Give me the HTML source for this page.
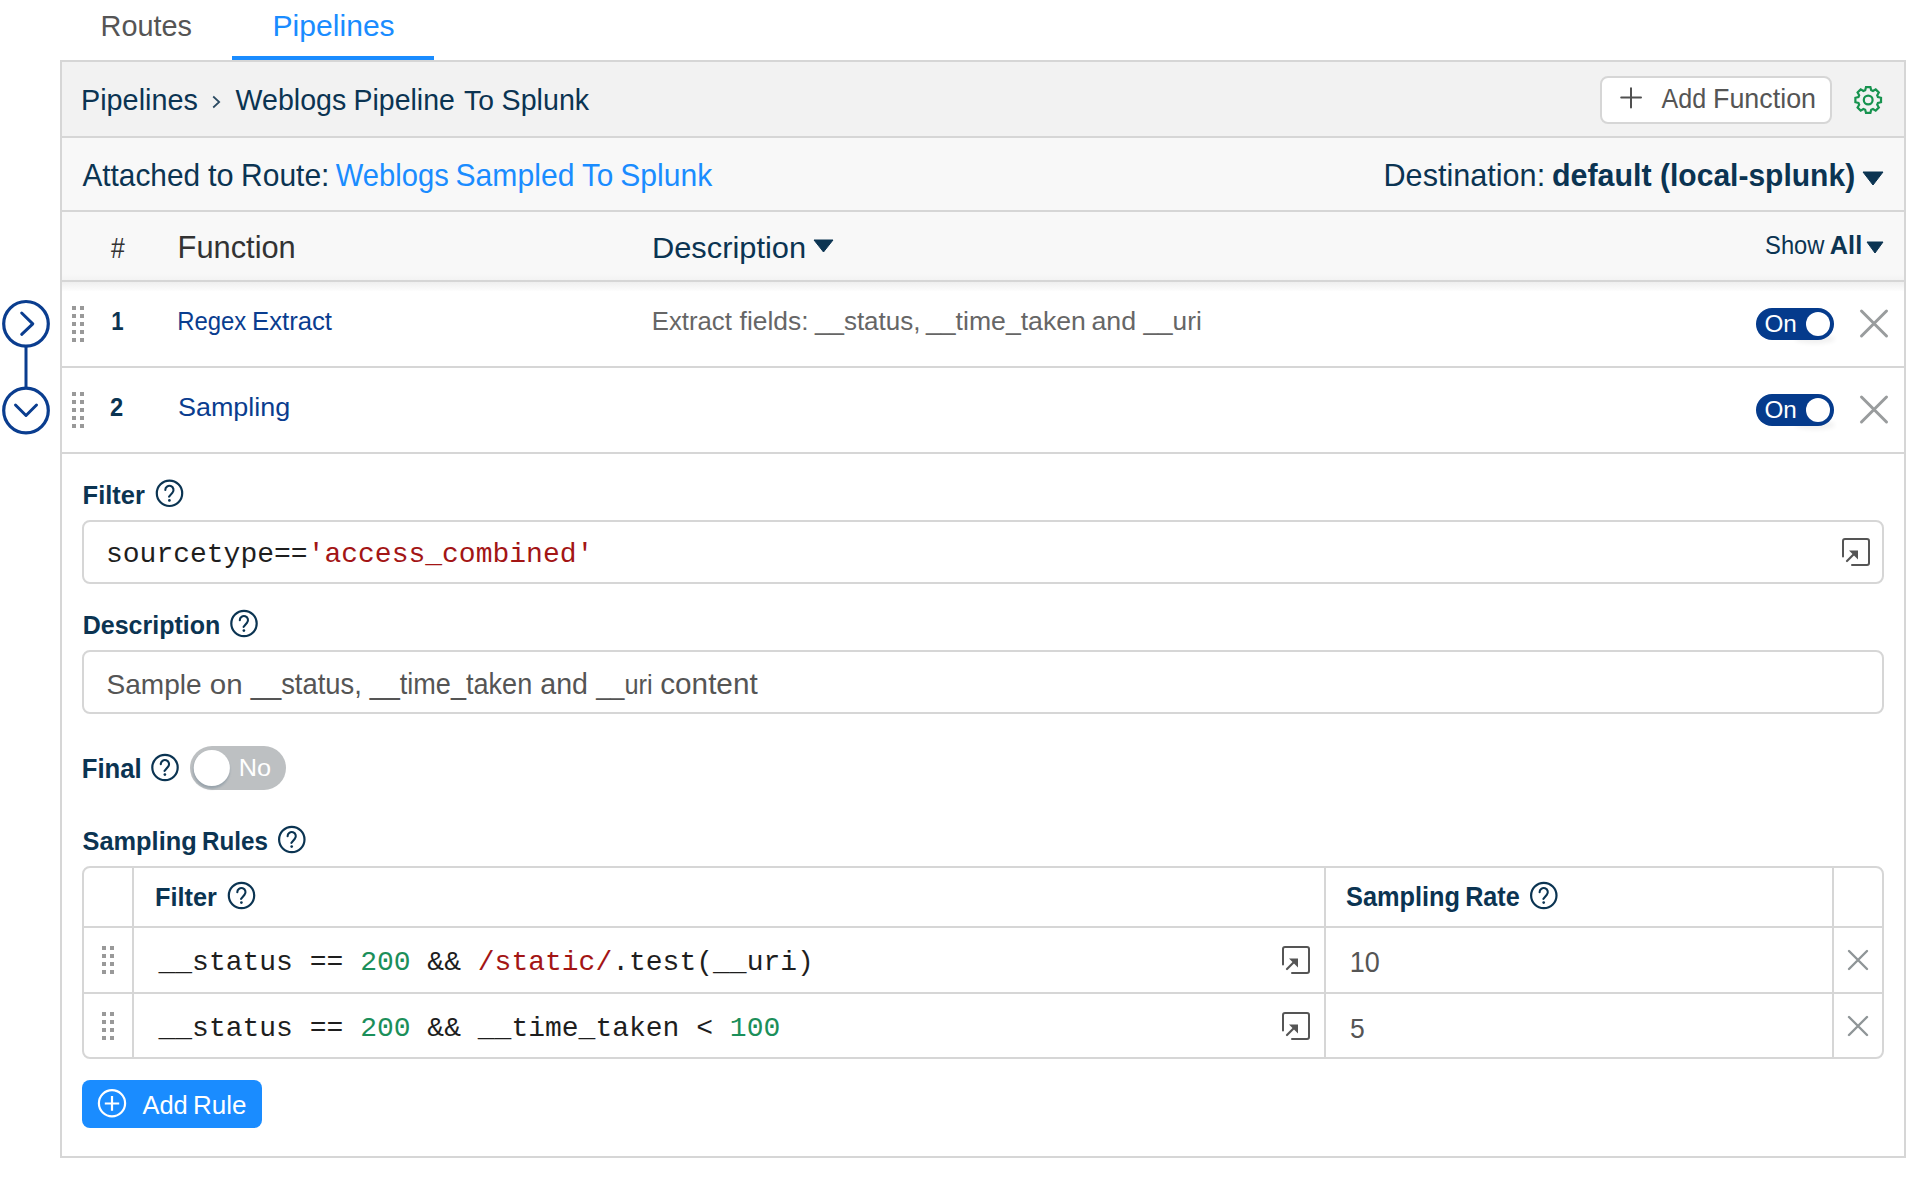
<!DOCTYPE html>
<html><head><meta charset="utf-8"><title>Pipelines - Weblogs Pipeline To Splunk</title>
<style>
*{box-sizing:border-box;margin:0;padding:0}
html,body{width:1922px;height:1180px;overflow:hidden;background:#fff;font-family:"Liberation Sans",sans-serif}
.a{position:absolute}
.ov{position:absolute;left:0;top:0;pointer-events:none}
</style></head>
<body>
<div class="a" style="left:232px;top:56px;width:202px;height:4px;background:#1a8cff"></div><div class="a" style="left:60px;top:60px;width:1846px;height:1098px;border:2px solid #d6d6d6;background:#fff"></div><div class="a" style="left:62px;top:62px;width:1842px;height:74px;background:#f2f2f2"></div><div class="a" style="left:62px;top:136px;width:1842px;height:2px;background:#d6d6d6"></div><div class="a" style="left:62px;top:138px;width:1842px;height:72px;background:#f8f8f8"></div><div class="a" style="left:62px;top:210px;width:1842px;height:2px;background:#d6d6d6"></div><div class="a" style="left:62px;top:212px;width:1842px;height:68px;background:#f8f8f8"></div><div class="a" style="left:62px;top:280px;width:1842px;height:2px;background:#d6d6d6"></div><div class="a" style="left:62px;top:282px;width:1842px;height:9px;background:linear-gradient(#efefef,#fdfdfd)"></div><div class="a" style="left:62px;top:274px;width:1842px;height:6px;background:linear-gradient(#f8f8f8,#f3f3f3)"></div><div class="a" style="left:62px;top:366px;width:1842px;height:2px;background:#d6d6d6"></div><div class="a" style="left:62px;top:452px;width:1842px;height:2px;background:#d6d6d6"></div><div class="a" style="left:1600px;top:76px;width:232px;height:48px;border:2px solid #d6d6d6;border-radius:8px;background:#fff"></div><div class="a" style="left:82px;top:520px;width:1802px;height:64px;border:2px solid #d6d6d6;border-radius:8px;background:#fff"></div><div class="a" style="left:82px;top:650px;width:1802px;height:64px;border:2px solid #d6d6d6;border-radius:8px;background:#fff"></div><div class="a" style="left:190px;top:746px;width:96px;height:44px;background:#bdc0c2;border-radius:22px"></div><div class="a" style="left:82px;top:866px;width:1802px;height:193px;border:2px solid #d6d6d6;border-radius:8px;background:#fff"></div><div class="a" style="left:84px;top:926px;width:1798px;height:2px;background:#d6d6d6"></div><div class="a" style="left:84px;top:992px;width:1798px;height:2px;background:#d6d6d6"></div><div class="a" style="left:132px;top:868px;width:2px;height:189px;background:#d6d6d6"></div><div class="a" style="left:1324px;top:868px;width:2px;height:189px;background:#d6d6d6"></div><div class="a" style="left:1832px;top:868px;width:2px;height:189px;background:#d6d6d6"></div><div class="a" style="left:82px;top:1080px;width:180px;height:48px;background:#1a8cff;border-radius:8px"></div>
<svg class="ov" width="1922" height="1180" viewBox="0 0 1922 1180"><defs><filter id="blur1" x="-20%" y="-20%" width="140%" height="140%"><feGaussianBlur stdDeviation="0.8"/></filter><filter id="blur2" x="-50%" y="-50%" width="200%" height="200%"><feGaussianBlur stdDeviation="2"/></filter></defs><g font-family='"Liberation Sans", sans-serif'><path d="M1865.19 90.26 L1866.00 87.19 L1870.40 87.19 L1871.21 90.26 L1872.96 90.98 L1875.70 89.38 L1878.82 92.50 L1877.22 95.24 L1877.94 96.99 L1881.01 97.80 L1881.01 102.20 L1877.94 103.01 L1877.22 104.76 L1878.82 107.50 L1875.70 110.62 L1872.96 109.02 L1871.21 109.74 L1870.40 112.81 L1866.00 112.81 L1865.19 109.74 L1863.44 109.02 L1860.70 110.62 L1857.58 107.50 L1859.18 104.76 L1858.46 103.01 L1855.39 102.20 L1855.39 97.80 L1858.46 96.99 L1859.18 95.24 L1857.58 92.50 L1860.70 89.38 L1863.44 90.98Z" fill="none" stroke="#17934f" stroke-width="2.2" stroke-linejoin="miter"/><circle cx="1868.2" cy="100" r="4.4" fill="none" stroke="#17934f" stroke-width="2.2"/><path d="M1631 88.2 V107.6 M1621.2 97.6 H1641" stroke="#505050" stroke-width="2" stroke-linecap="round"/><path d="M213.2 96.5 L219.2 102 L213.2 107.5" fill="none" stroke="#2b4a62" stroke-width="1.7"/><path d="M1863 172 H1883 L1873.0 185 Z" fill="#0b3452" stroke="#0b3452" stroke-width="1" stroke-linejoin="round"/><path d="M814 240 H833 L823.5 252 Z" fill="#0b3452" stroke="#0b3452" stroke-width="1" stroke-linejoin="round"/><path d="M1867 242 H1883 L1875.0 253 Z" fill="#0b3452" stroke="#0b3452" stroke-width="1" stroke-linejoin="round"/><circle cx="26" cy="323.8" r="22.3" fill="none" stroke="#0a3d8f" stroke-width="3.2"/><path d="M21.7 313 L32.8 323.8 L21.7 334.3" fill="none" stroke="#0a3d8f" stroke-width="3" stroke-linecap="round" stroke-linejoin="round"/><path d="M26 346 V388" stroke="#0a3d8f" stroke-width="3"/><circle cx="26" cy="410.5" r="22.3" fill="none" stroke="#0a3d8f" stroke-width="3.2"/><path d="M15.5 405 L26 415.5 L36.5 405" fill="none" stroke="#0a3d8f" stroke-width="3" stroke-linecap="round" stroke-linejoin="round"/><rect x="72" y="306" width="4" height="4" fill="#999"/><rect x="80" y="306" width="4" height="4" fill="#999"/><rect x="72" y="314" width="4" height="4" fill="#999"/><rect x="80" y="314" width="4" height="4" fill="#999"/><rect x="72" y="322" width="4" height="4" fill="#999"/><rect x="80" y="322" width="4" height="4" fill="#999"/><rect x="72" y="330" width="4" height="4" fill="#999"/><rect x="80" y="330" width="4" height="4" fill="#999"/><rect x="72" y="338" width="4" height="4" fill="#999"/><rect x="80" y="338" width="4" height="4" fill="#999"/><rect x="72" y="392" width="4" height="4" fill="#999"/><rect x="80" y="392" width="4" height="4" fill="#999"/><rect x="72" y="400" width="4" height="4" fill="#999"/><rect x="80" y="400" width="4" height="4" fill="#999"/><rect x="72" y="408" width="4" height="4" fill="#999"/><rect x="80" y="408" width="4" height="4" fill="#999"/><rect x="72" y="416" width="4" height="4" fill="#999"/><rect x="80" y="416" width="4" height="4" fill="#999"/><rect x="72" y="424" width="4" height="4" fill="#999"/><rect x="80" y="424" width="4" height="4" fill="#999"/><rect x="102" y="946" width="4" height="4" fill="#999"/><rect x="110" y="946" width="4" height="4" fill="#999"/><rect x="102" y="954" width="4" height="4" fill="#999"/><rect x="110" y="954" width="4" height="4" fill="#999"/><rect x="102" y="962" width="4" height="4" fill="#999"/><rect x="110" y="962" width="4" height="4" fill="#999"/><rect x="102" y="970" width="4" height="4" fill="#999"/><rect x="110" y="970" width="4" height="4" fill="#999"/><rect x="102" y="1012" width="4" height="4" fill="#999"/><rect x="110" y="1012" width="4" height="4" fill="#999"/><rect x="102" y="1020" width="4" height="4" fill="#999"/><rect x="110" y="1020" width="4" height="4" fill="#999"/><rect x="102" y="1028" width="4" height="4" fill="#999"/><rect x="110" y="1028" width="4" height="4" fill="#999"/><rect x="102" y="1036" width="4" height="4" fill="#999"/><rect x="110" y="1036" width="4" height="4" fill="#999"/><ellipse cx="1815" cy="339" rx="20" ry="5" fill="#000" opacity="0.05" filter="url(#blur2)"/><rect x="1756" y="308" width="78" height="32" rx="16" fill="#053b8c"/><circle cx="1818" cy="324" r="12" fill="#fff"/><ellipse cx="1815" cy="425" rx="20" ry="5" fill="#000" opacity="0.05" filter="url(#blur2)"/><rect x="1756" y="394" width="78" height="32" rx="16" fill="#053b8c"/><circle cx="1818" cy="410" r="12" fill="#fff"/><path d="M1861.5 311.0 L1886.5 336.0 M1886.5 311.0 L1861.5 336.0" stroke="#999c9d" stroke-width="3" stroke-linecap="round"/><path d="M1861.5 397.0 L1886.5 422.0 M1886.5 397.0 L1861.5 422.0" stroke="#999c9d" stroke-width="3" stroke-linecap="round"/><path d="M1849 951 L1867 969 M1867 951 L1849 969" stroke="#8f9597" stroke-width="2.4" stroke-linecap="round"/><path d="M1849 1017 L1867 1035 M1867 1017 L1849 1035" stroke="#8f9597" stroke-width="2.4" stroke-linecap="round"/><circle cx="169.5" cy="493.3" r="12.7" fill="none" stroke="#0b3452" stroke-width="2.2"/><path d="M165.30 490.00 A4.1 4.1 0 1 1 172.50 492.60 L169.10 496.70" fill="none" stroke="#0b3452" stroke-width="2.1" stroke-linecap="round" stroke-linejoin="round"/><circle cx="169.40" cy="500.40" r="1.35" fill="#0b3452"/><circle cx="244" cy="623.5" r="12.7" fill="none" stroke="#0b3452" stroke-width="2.2"/><path d="M239.80 620.20 A4.1 4.1 0 1 1 247.00 622.80 L243.60 626.90" fill="none" stroke="#0b3452" stroke-width="2.1" stroke-linecap="round" stroke-linejoin="round"/><circle cx="243.90" cy="630.60" r="1.35" fill="#0b3452"/><circle cx="165" cy="767.5" r="12.7" fill="none" stroke="#0b3452" stroke-width="2.2"/><path d="M160.80 764.20 A4.1 4.1 0 1 1 168.00 766.80 L164.60 770.90" fill="none" stroke="#0b3452" stroke-width="2.1" stroke-linecap="round" stroke-linejoin="round"/><circle cx="164.90" cy="774.60" r="1.35" fill="#0b3452"/><circle cx="291.8" cy="839.5" r="12.7" fill="none" stroke="#0b3452" stroke-width="2.2"/><path d="M287.60 836.20 A4.1 4.1 0 1 1 294.80 838.80 L291.40 842.90" fill="none" stroke="#0b3452" stroke-width="2.1" stroke-linecap="round" stroke-linejoin="round"/><circle cx="291.70" cy="846.60" r="1.35" fill="#0b3452"/><circle cx="241.5" cy="895.5" r="12.7" fill="none" stroke="#0b3452" stroke-width="2.2"/><path d="M237.30 892.20 A4.1 4.1 0 1 1 244.50 894.80 L241.10 898.90" fill="none" stroke="#0b3452" stroke-width="2.1" stroke-linecap="round" stroke-linejoin="round"/><circle cx="241.40" cy="902.60" r="1.35" fill="#0b3452"/><circle cx="1543.8" cy="895.5" r="12.7" fill="none" stroke="#0b3452" stroke-width="2.2"/><path d="M1539.60 892.20 A4.1 4.1 0 1 1 1546.80 894.80 L1543.40 898.90" fill="none" stroke="#0b3452" stroke-width="2.1" stroke-linecap="round" stroke-linejoin="round"/><circle cx="1543.70" cy="902.60" r="1.35" fill="#0b3452"/><path d="M1843 556.5 V541 a2 2 0 0 1 2 -2 H1867 a2 2 0 0 1 2 2 V563 a2 2 0 0 1 -2 2 H1852" fill="none" stroke="#555" stroke-width="2" stroke-linecap="round"/><path d="M1847 561 L1855 553" stroke="#555" stroke-width="2.2" stroke-linecap="round"/><path d="M1849 550.5 H1858 V559.5 Z" fill="#555"/><path d="M1283 964.5 V949 a2 2 0 0 1 2 -2 H1307 a2 2 0 0 1 2 2 V971 a2 2 0 0 1 -2 2 H1292" fill="none" stroke="#555" stroke-width="2" stroke-linecap="round"/><path d="M1287 969 L1295 961" stroke="#555" stroke-width="2.2" stroke-linecap="round"/><path d="M1289 958.5 H1298 V967.5 Z" fill="#555"/><path d="M1283 1030.5 V1015 a2 2 0 0 1 2 -2 H1307 a2 2 0 0 1 2 2 V1037 a2 2 0 0 1 -2 2 H1292" fill="none" stroke="#555" stroke-width="2" stroke-linecap="round"/><path d="M1287 1035 L1295 1027" stroke="#555" stroke-width="2.2" stroke-linecap="round"/><path d="M1289 1024.5 H1298 V1033.5 Z" fill="#555"/><circle cx="211.4" cy="770.2" r="18.5" fill="#98a3ab" filter="url(#blur1)"/><circle cx="211.8" cy="768" r="18.1" fill="#fff"/><circle cx="112" cy="1103.3" r="13.1" fill="none" stroke="#fff" stroke-width="2.2"/><path d="M112 1096 V1110.8 M104.8 1103.5 H119.2" stroke="#fff" stroke-width="2.2"/><text transform="translate(100.58 36) scale(0.9620 1)" font-weight="400" font-size="30.000" fill="#555555">Routes</text><text transform="translate(272.49 36) scale(1.0042 1)" font-weight="400" font-size="30.000" fill="#1a8cff">Pipelines</text><text transform="translate(80.98 110) scale(1.0088 1)" font-weight="400" font-size="28.571" fill="#0b3452">Pipelines</text><text transform="translate(235.60 110) scale(1.0000 1)" font-weight="400" font-size="28.571" fill="#0b3452">Weblogs</text><text transform="translate(353.51 110) scale(0.9970 1)" font-weight="400" font-size="28.571" fill="#0b3452">Pipeline</text><text transform="translate(464.00 110) scale(0.9897 1)" font-weight="400" font-size="28.571" fill="#0b3452">To</text><text transform="translate(501.60 110) scale(1.0023 1)" font-weight="400" font-size="28.571" fill="#0b3452">Splunk</text><text transform="translate(1661.60 108) scale(0.9234 1)" font-weight="400" font-size="27.143" fill="#555555">Add</text><text transform="translate(1713.02 108) scale(0.9901 1)" font-weight="400" font-size="27.143" fill="#555555">Function</text><text transform="translate(82.40 186) scale(0.9714 1)" font-weight="400" font-size="30.714" fill="#0b3452">Attached</text><text transform="translate(208.00 186) scale(1.0000 1)" font-weight="400" font-size="30.714" fill="#0b3452">to</text><text transform="translate(241.05 186) scale(0.9767 1)" font-weight="400" font-size="30.714" fill="#0b3452">Route:</text><text transform="translate(335.80 186) scale(0.9500 1)" font-weight="400" font-size="30.714" fill="#1a8cff">Weblogs</text><text transform="translate(455.52 186) scale(0.9814 1)" font-weight="400" font-size="30.714" fill="#1a8cff">Sampled</text><text transform="translate(581.90 186) scale(0.9677 1)" font-weight="400" font-size="30.714" fill="#1a8cff">To</text><text transform="translate(620.22 186) scale(0.9796 1)" font-weight="400" font-size="30.714" fill="#1a8cff">Splunk</text><text transform="translate(1383.51 186) scale(0.9968 1)" font-weight="400" font-size="30.714" fill="#0b3452">Destination:</text><text transform="translate(1552.01 186) scale(0.9900 1)" font-weight="700" font-size="30.714" fill="#0b3452">default</text><text transform="translate(1660.02 186) scale(0.9777 1)" font-weight="700" font-size="30.714" fill="#0b3452">(local-splunk)</text><text transform="translate(111.00 258) scale(0.8235 1)" font-weight="400" font-size="30.000" fill="#333333">#</text><text transform="translate(177.59 258) scale(1.0035 1)" font-weight="400" font-size="30.714" fill="#333333">Function</text><text transform="translate(651.95 258) scale(1.0274 1)" font-weight="400" font-size="30.000" fill="#0b3452">Description</text><text transform="translate(1765.08 254) scale(0.9219 1)" font-weight="400" font-size="25.714" fill="#0b3452">Show</text><text transform="translate(1829.84 254) scale(0.9581 1)" font-weight="700" font-size="26.429" fill="#0b3452">All</text><text transform="translate(111.13 330) scale(0.8654 1)" font-weight="700" font-size="25.714" fill="#0b3452">1</text><text transform="translate(177.14 330) scale(0.9306 1)" font-weight="400" font-size="25.714" fill="#0a3d8f">Regex</text><text transform="translate(252.00 330) scale(1.0000 1)" font-weight="400" font-size="25.714" fill="#0a3d8f">Extract</text><text transform="translate(651.75 330) scale(0.9737 1)" font-weight="400" font-size="26.429" fill="#666666">Extract</text><text transform="translate(739.60 330) scale(0.9985 1)" font-weight="400" font-size="26.429" fill="#666666">fields:</text><text transform="translate(814.98 330) scale(0.9840 1)" font-weight="400" font-size="26.429" fill="#666666">__status,</text><text transform="translate(926.01 330) scale(1.0076 1)" font-weight="400" font-size="26.429" fill="#666666">__time_taken</text><text transform="translate(1091.49 330) scale(1.0119 1)" font-weight="400" font-size="26.429" fill="#666666">and</text><text transform="translate(1143.49 330) scale(0.9914 1)" font-weight="400" font-size="26.429" fill="#666666">__uri</text><text transform="translate(1764.50 332) scale(1.0000 1)" font-weight="400" font-size="24.286" fill="#ffffff">On</text><text transform="translate(110.08 416) scale(0.9231 1)" font-weight="700" font-size="25.714" fill="#0b3452">2</text><text transform="translate(177.95 416) scale(1.0476 1)" font-weight="400" font-size="25.714" fill="#0a3d8f">Sampling</text><text transform="translate(1764.50 418) scale(1.0000 1)" font-weight="400" font-size="24.286" fill="#ffffff">On</text><text transform="translate(82.61 504) scale(0.9903 1)" font-weight="700" font-size="25.714" fill="#0b3452">Filter</text><text transform="translate(82.63 634) scale(0.9741 1)" font-weight="700" font-size="25.714" fill="#0b3452">Description</text><text transform="translate(106.52 694) scale(0.9821 1)" font-weight="400" font-size="28.571" fill="#555555">Sample</text><text transform="translate(209.77 694) scale(1.0345 1)" font-weight="400" font-size="28.571" fill="#555555">on</text><text transform="translate(250.66 694) scale(0.9591 1)" font-weight="400" font-size="28.571" fill="#555555">__status,</text><text transform="translate(369.65 694) scale(0.9480 1)" font-weight="400" font-size="28.571" fill="#555555">__time_taken</text><text transform="translate(540.30 694) scale(1.0000 1)" font-weight="400" font-size="28.571" fill="#555555">and</text><text transform="translate(596.19 694) scale(0.8889 1)" font-weight="400" font-size="28.571" fill="#555555">__uri</text><text transform="translate(660.26 694) scale(1.0398 1)" font-weight="400" font-size="28.571" fill="#555555">content</text><text transform="translate(81.71 778) scale(0.9467 1)" font-weight="700" font-size="27.143" fill="#0b3452">Final</text><text transform="translate(238.81 776) scale(1.0429 1)" font-weight="400" font-size="24.286" fill="#ffffff">No</text><text transform="translate(82.61 850) scale(0.9858 1)" font-weight="700" font-size="25.714" fill="#0b3452">Sampling</text><text transform="translate(202.06 850) scale(0.9412 1)" font-weight="700" font-size="25.714" fill="#0b3452">Rules</text><text transform="translate(155.02 906) scale(0.9839 1)" font-weight="700" font-size="25.714" fill="#0b3452">Filter</text><text transform="translate(1346.07 906) scale(0.9333 1)" font-weight="700" font-size="27.143" fill="#0b3452">Sampling</text><text transform="translate(1465.14 906) scale(0.9286 1)" font-weight="700" font-size="27.143" fill="#0b3452">Rate</text><text transform="translate(1349.71 972) scale(0.9448 1)" font-weight="400" font-size="28.571" fill="#555555">10</text><text transform="translate(1350.07 1038) scale(0.9286 1)" font-weight="400" font-size="28.571" fill="#555555">5</text><text transform="translate(142.40 1114) scale(0.9909 1)" font-weight="400" font-size="25.714" fill="#ffffff">Add</text><text transform="translate(192.98 1114) scale(1.0120 1)" font-weight="400" font-size="25.714" fill="#ffffff">Rule</text><text x="106" y="562" font-family='"Liberation Mono", monospace' font-size="28" xml:space="preserve"><tspan fill="#1e1e1e">sourcetype==</tspan><tspan fill="#a31515">'access_combined'</tspan></text><text x="158.5" y="970" font-family='"Liberation Mono", monospace' font-size="28" xml:space="preserve"><tspan fill="#1e1e1e">__status == </tspan><tspan fill="#1b8f5a">200</tspan><tspan fill="#1e1e1e"> &amp;&amp; </tspan><tspan fill="#a31515">/static/</tspan><tspan fill="#1e1e1e">.test(__uri)</tspan></text><text x="158.5" y="1036" font-family='"Liberation Mono", monospace' font-size="28" xml:space="preserve"><tspan fill="#1e1e1e">__status == </tspan><tspan fill="#1b8f5a">200</tspan><tspan fill="#1e1e1e"> &amp;&amp; __time_taken &lt; </tspan><tspan fill="#1b8f5a">100</tspan></text></g></svg>
</body></html>
